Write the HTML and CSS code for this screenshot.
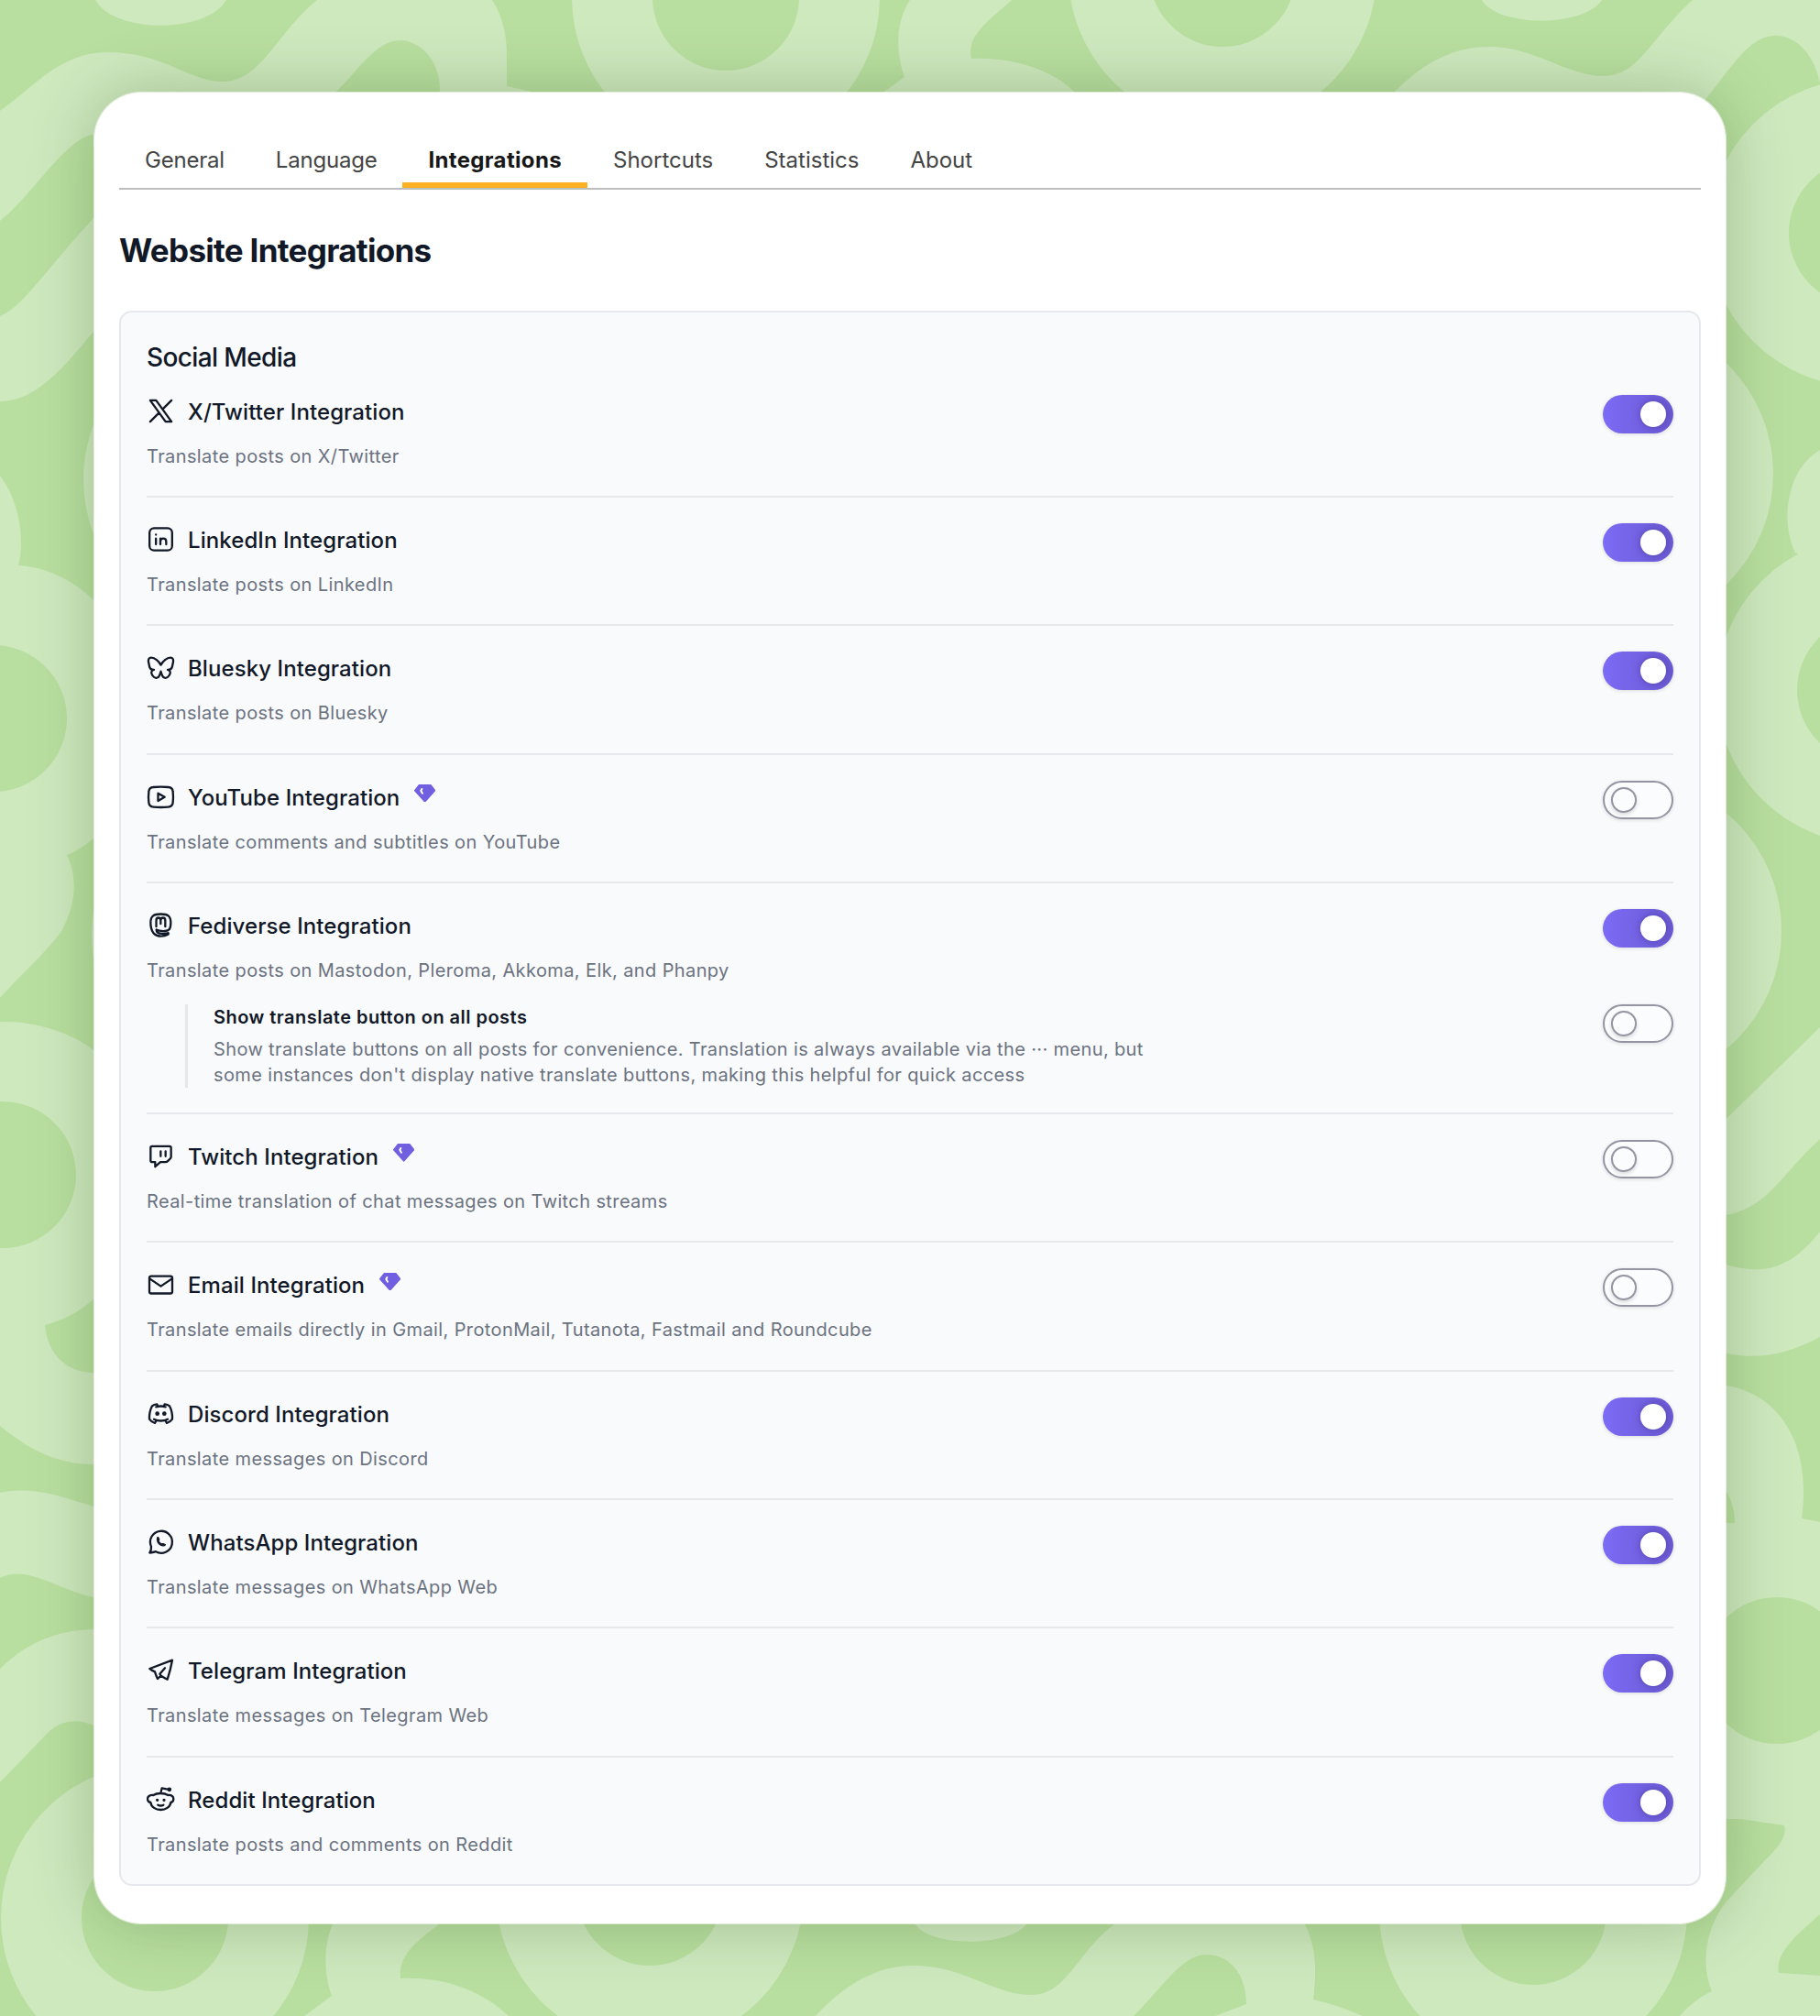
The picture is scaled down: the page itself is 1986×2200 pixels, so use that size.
FILE: index.html
```html
<!DOCTYPE html>
<html lang="en">
<head>
<meta charset="utf-8">
<title>Website Integrations</title>
<link rel="stylesheet" href="styles.css">
</head>
<body>
<div class="stage">
<svg class="pattern" viewBox="0 0 1986 2200" aria-hidden="true">
  <g class="pattern-fill">
    <path d="M104 0C125 37 225 37 247 0Z"/>
    <path d="M0 121C35 97 65 57 117 57C180 57 205 89 243 89C285 89 300 38 346 0H537C550 20 553 42 553 60V94L579 100V140H470L480 98C480 62 455 44 437 44C410 44 390 78 367 100V160H102V147C72 150 35 214 0 241Z"/>
    <path d="M0 345C25 335 45 300 102 238H150V362H102C70 400 40 438 0 438Z"/>
    <path d="M0 519C22 548 27 590 20 617C50 619 79 632 102 655H140V915H102C92 923 83 929 73 933C86 960 82 990 66 1018C46 1044 20 1066 0 1089Z"/>
    <path d="M0 1115C40 1114 80 1128 102 1146H140V1418H102C86 1432 68 1441 49 1446C52 1480 75 1498 102 1498H140V1598H102C60 1598 30 1580 0 1556Z"/>
    <path d="M0 1629C40 1621 70 1635 102 1644H140V1743H102C60 1734 30 1707 0 1722Z"/>
    <path d="M0 1821C35 1787 70 1779 102 1778H140V1883H102C85 1875 68 1877 54 1889L0 1945Z"/>
    <path d="M993 0C976 26 978 58 987 84L965 100V130H1172V100C1150 77 1105 62 1060 64C1054 38 1080 22 1104 0Z"/>
    <path d="M1617 0C1635 30 1728 30 1748 0Z"/>
    <path d="M1522 100C1555 67 1587 51 1625 51C1675 51 1710 83 1750 83C1788 83 1800 43 1847 0H1986V91C1978 50 1950 34 1929 40C1905 46 1890 73 1862 107L1840 140H1522Z"/>
    <path d="M1986 491C1952 510 1941 565 1959 603L1986 620Z"/>
    <path d="M1860 1244L1986 1121V1243C1943 1282 1930 1317 1884 1326H1860Z"/>
    <path d="M1860 1372C1910 1391 1945 1396 1986 1344V1459C1950 1478 1920 1484 1884 1477H1860Z"/>
    <path d="M1860 1512H1884C1935 1520 1978 1568 1966 1657L1986 1661V2089C1962 2110 1936 2132 1941 2153C1958 2154 1972 2155 1986 2156V2200H1833C1842 2189 1855 2179 1868 2173C1855 2142 1862 2102 1884 2075L1926 2030C1944 2013 1950 2002 1947 1992L1900 1985H1860V1662H1893C1893 1650 1890 1638 1884 1628H1860Z"/>
    <path d="M363 2100C352 2125 354 2155 362 2178L332 2200H555C525 2172 485 2157 437 2159C434 2134 455 2118 479 2100V2060H363Z"/>
    <path d="M999 2090V2100C1015 2125 1100 2125 1120 2100V2090Z"/>
    <path d="M890 2200C930 2157 965 2145 998 2145C1050 2145 1085 2177 1125 2177C1165 2177 1175 2130 1216 2100V2060H1424V2100C1438 2128 1436 2155 1433 2182C1455 2187 1470 2193 1487 2200H1326L1360 2187C1360 2150 1338 2133 1317 2133C1290 2133 1270 2167 1237 2200Z"/>
    <circle cx="259" cy="523" r="168"/>
    <circle cx="268" cy="1021" r="168"/>
    <circle cx="1767" cy="517" r="168"/>
    <circle cx="1776" cy="1016" r="168"/>
  </g>
  <g class="pattern-ring">
    <circle cx="792" cy="-3" r="124"/>
    <circle cx="1334" cy="-29" r="124"/>
    <circle cx="2032" cy="254" r="124"/>
    <circle cx="2041" cy="753" r="124"/>
    <circle cx="169" cy="2093" r="124"/>
    <circle cx="709" cy="2065" r="124"/>
    <circle cx="1673" cy="2086" r="124"/>
  </g>
  <g class="pattern-hole">
    <circle cx="-7" cy="784" r="80"/>
    <circle cx="3" cy="1282" r="80"/>
    <circle cx="1939" cy="1823" r="80"/>
  </g>
</svg>
<main class="card">
  <nav class="tabs">
    <a class="tab tab-snug">General</a>
    <a class="tab tab-snug">Language</a>
    <a class="tab tab-active">Integrations</a>
    <a class="tab">Shortcuts</a>
    <a class="tab">Statistics</a>
    <a class="tab">About</a>
  </nav>
  <h1 class="page-title">Website Integrations</h1>
  <section class="panel">
    <h2 class="group-title">Social Media</h2>

    <article class="row">
      <div class="info">
        <h3 class="name"><svg class="icon thin" viewBox="0 0 24 24"><path d="M3 21L10.55 13.45L3 3H8L13.45 10.55L21 3M10.55 13.45L16 21H21L13.45 10.55"/></svg><span>X/Twitter Integration</span></h3>
        <p class="desc">Translate posts on X/Twitter</p>
      </div>
      <span class="toggle on"><i class="knob"></i></span>
    </article>

    <article class="row">
      <div class="info">
        <h3 class="name"><svg class="icon" viewBox="60 459 93 93"><rect x="69.500" y="469" width="74" height="73" rx="15"/><path d="M90.500 503V522M105 503V522M105 513C105 507 109 503 114.500 503S124 507 124 513V522M90.500 490V490.500"/></svg><span>LinkedIn Integration</span></h3>
        <p class="desc">Translate posts on LinkedIn</p>
      </div>
      <span class="toggle on"><i class="knob"></i></span>
    </article>

    <article class="row">
      <div class="info">
        <h3 class="name"><svg class="icon" viewBox="60 880 93 93"><path d="M106.500 918C100 906 87 894 75 894C67 894 65 900 66 908L69 922C70 930 76 934 84 934C75 936 73 944 79 952C86 963 97 963 101 954C103 950 105 945 106.500 939C108 945 110 950 112 954C116 963 127 963 134 952C140 944 138 936 129 934C137 934 143 930 144 922L147 908C148 900 146 894 138 894C126 894 113 906 106.500 918Z"/></svg><span>Bluesky Integration</span></h3>
        <p class="desc">Translate posts on Bluesky</p>
      </div>
      <span class="toggle on"><i class="knob"></i></span>
    </article>

    <article class="row">
      <div class="info">
        <h3 class="name"><svg class="icon" viewBox="60 71 93 93"><path d="M82 86Q106.500 84 131 86Q145 87 146 101Q148 118.500 146 136Q145 150 131 151Q106.500 153 82 151Q68 150 67 136Q65 118.500 67 101Q68 87 82 86Z"/><path d="M97.500 106L119 118.500L97.500 131Z"/></svg><span>YouTube Integration</span><svg class="gem" viewBox="0 0 70 59"><path class="gem-body" d="M16 2H54L68 20L35 57L2 20Z"/><path class="gem-shine" d="M25 15L22 21L27 29"/></svg></h3>
        <p class="desc">Translate comments and subtitles on YouTube</p>
      </div>
      <span class="toggle"><i class="knob"></i></span>
    </article>

    <article class="row row-tall">
      <div class="info">
        <h3 class="name"><svg class="icon" viewBox="60 491.500 93 93"><path d="M131 568C117 577 95 577 85 567C76 558 73 545 73 530C73 509 82 502 106 502C131 502 139 509 139 530C139 551 134 557 120 557.500C108 558 98 557 92 553C92 562 100 566 109 566C118 567 126 566 131 564Z"/><path d="M91.500 543V523C91.500 511 106 511 106 523V534M106 523C106 511 121 511 121 523V543"/></svg><span>Fediverse Integration</span></h3>
        <p class="desc">Translate posts on Mastodon, Pleroma, Akkoma, Elk, and Phanpy</p>
      </div>
      <span class="toggle on"><i class="knob"></i></span>
      <div class="sub">
        <div class="sub-info">
          <h4 class="sub-name">Show translate button on all posts</h4>
          <p class="sub-desc">Show translate buttons on all posts for convenience. Translation is always available via the ··· menu, but some instances don't display native translate buttons, making this helpful for quick access</p>
        </div>
        <span class="toggle"><i class="knob"></i></span>
      </div>
    </article>

    <article class="row">
      <div class="info">
        <h3 class="name"><svg class="icon" viewBox="60 48.500 93 93"><path d="M78 63H135Q140 63 140 68V98Q140 101 137 104L129 112Q126 115 122 115H105L88 130V115H78Q73 115 73 110V68Q73 63 78 63ZM106 80V96M122 80V96"/></svg><span>Twitch Integration</span><svg class="gem" viewBox="0 0 70 59"><path class="gem-body" d="M16 2H54L68 20L35 57L2 20Z"/><path class="gem-shine" d="M25 15L22 21L27 29"/></svg></h3>
        <p class="desc">Real-time translation of chat messages on Twitch streams</p>
      </div>
      <span class="toggle"><i class="knob"></i></span>
    </article>

    <article class="row">
      <div class="info">
        <h3 class="name"><svg class="icon" viewBox="60 470 93 93"><rect x="69" y="490" width="75" height="56.500" rx="6"/><path d="M71 499L106.500 523L142 499"/></svg><span>Email Integration</span><svg class="gem" viewBox="0 0 70 59"><path class="gem-body" d="M16 2H54L68 20L35 57L2 20Z"/><path class="gem-shine" d="M25 15L22 21L27 29"/></svg></h3>
        <p class="desc">Translate emails directly in Gmail, ProtonMail, Tutanota, Fastmail and Roundcube</p>
      </div>
      <span class="toggle"><i class="knob"></i></span>
    </article>

    <article class="row">
      <div class="info">
        <h3 class="name"><svg class="icon" viewBox="60 891 93 93"><path d="M97 914L94 907Q84 908 78 913Q68 932 69 956Q76 966 87 969L92 960M116 914L119 907Q129 908 135 913Q145 932 144 956Q137 966 126 969L121 960M91 916Q106.500 911 122 916M84 956Q106.500 967 129 956"/><circle class="solid" cx="95" cy="938" r="5"/><circle class="solid" cx="118" cy="938" r="5"/></svg><span>Discord Integration</span></h3>
        <p class="desc">Translate messages on Discord</p>
      </div>
      <span class="toggle on"><i class="knob"></i></span>
    </article>

    <article class="row">
      <div class="info">
        <h3 class="name"><svg class="icon" viewBox="60 52 93 93"><path d="M75 114A36 36 0 1 1 90 130.500Q80 134 70 134.500Q76 126 75 114Z"/><path class="solid" d="M95 85C97 82 99 84 101 91C101 94 98 95 100 98C103 102 106 106 110 106C113 103 116 105 121 108C119 113 111 112 105 109C97 104 93 95 95 85Z"/></svg><span>WhatsApp Integration</span></h3>
        <p class="desc">Translate messages on WhatsApp Web</p>
      </div>
      <span class="toggle on"><i class="knob"></i></span>
    </article>

    <article class="row">
      <div class="info">
        <h3 class="name"><svg class="icon" viewBox="60 473 93 93"><path d="M144 487L70 515Q78 521 87 525Q91 538 96 548L107 538Q118 545 128 550Q138 519 144 487ZM107 538L103 532L120 513"/></svg><span>Telegram Integration</span></h3>
        <p class="desc">Translate messages on Telegram Web</p>
      </div>
      <span class="toggle on"><i class="knob"></i></span>
    </article>

    <article class="row row-last">
      <div class="info">
        <h3 class="name"><svg class="icon" viewBox="60 893 93 93"><path d="M106 920C96 920 88 922 82 926C72 924 63 930 63 938C63 945 67 949 73 950C75 965 90 974 106 974C122 974 137 965 139 950C144 949 148 945 148 938C148 930 140 924 130 926C124 922 116 920 106 920ZM106 919L110 903L129 907M97 958Q106 963 115 958"/><circle class="solid" cx="134.500" cy="907.500" r="5"/><circle class="solid" cx="95" cy="942" r="3"/><circle class="solid" cx="117" cy="942" r="3"/></svg><span>Reddit Integration</span></h3>
        <p class="desc">Translate posts and comments on Reddit</p>
      </div>
      <span class="toggle on"><i class="knob"></i></span>
    </article>
  </section>
</main>
</div>
</body>
</html>
```
FILE: styles.css
```css
* { box-sizing: border-box; margin: 0; padding: 0; }

body {
  width: 1986px;
  height: 2200px;
  overflow: hidden;
  background: #b9dfa0;
  font-family: Inter, "Liberation Sans", sans-serif;
  color: #111827;
}

.stage { display: grid; width: 1986px; height: 2200px; }
.pattern, .card { grid-area: 1 / 1; }
.pattern { width: 1986px; height: 2200px; }
.pattern-fill { fill: #cfe9bf; }
.pattern-ring { fill: none; stroke: #cfe9bf; stroke-width: 88; }
.pattern-hole { fill: #b9dfa0; }

.card {
  margin: 100px 102px;
  padding: 56px 27px 0;
  border: 1px solid rgba(255, 255, 255, 0.6);
  border-radius: 52px;
  background: #fff;
  background-clip: padding-box;
  box-shadow: 0 0 70px rgba(20, 50, 0, 0.24);
}

.tabs { display: flex; height: 50px; border-bottom: 2px solid #bdbdbd; }
.tab { height: 48px; padding: 0 28px; font-size: 24px; line-height: 36px; letter-spacing: 0; color: #444; }
.tab-snug { letter-spacing: -0.22px; }
.tab-active { border-bottom: 6px solid #fdb022; font-weight: 700; letter-spacing: 0.34px; color: #171717; }

.page-title { margin-top: 44px; font-size: 35px; line-height: 44px; font-weight: 700; letter-spacing: -0.7px; }

.panel {
  height: 1719px;
  margin-top: 44px;
  padding: 36px 28px 0;
  border: 2px solid #e6e8ee;
  border-radius: 14px;
  background: #f9fafc;
}
.group-title { font-size: 28px; line-height: 27px; font-weight: 500; letter-spacing: -0.62px; margin-bottom: -1.5px; }

.row {
  display: flex;
  flex-wrap: wrap;
  justify-content: space-between;
  align-items: flex-start;
  align-content: flex-start;
  height: 140.36px;
  padding-top: 28px;
  border-bottom: 2px solid #e7e8eb;
}
.row-tall { height: 252.1px; }
.row-last { border-bottom: 0; }

.name { display: flex; align-items: center; height: 36px; font-size: 24px; line-height: 34px; font-weight: 500; letter-spacing: 0.08px; }
.name span { margin-top: 2px; }
.icon {
  width: 31px;
  height: 31px;
  margin: -1px 14px 0 0;
  fill: none;
  stroke: #111827;
  stroke-width: 6.9;
  stroke-linecap: round;
  stroke-linejoin: round;
}
.thin { stroke-width: 1.8; }
.solid { fill: #111827; stroke-width: 4; }
.gem { width: 23.3px; height: 19.7px; margin: -8px 0 0 15.5px; }
.gem-body { fill: #705fe0; stroke: #705fe0; stroke-width: 4; stroke-linejoin: round; }
.gem-shine { fill: none; stroke: #fff; stroke-width: 6; stroke-linecap: round; stroke-linejoin: round; }

.desc { margin-top: 17px; font-size: 20px; line-height: 28px; letter-spacing: 0.39px; color: #6b7280; }

.toggle {
  display: flex;
  align-items: center;
  flex: none;
  width: 77px;
  height: 42px;
  padding-left: 6.5px;
  border: 2px solid #9494a3;
  border-radius: 21px;
  background: #fbfcfd;
  box-shadow: 0 1px 4px rgba(0, 0, 0, 0.12);
}
.knob {
  width: 28px;
  height: 28px;
  border: 2px solid #9494a3;
  border-radius: 50%;
  background: #fbfcfd;
  box-shadow: 0 2px 4px rgba(0, 0, 0, 0.14);
}
.on { padding-left: 40.5px; border: 0; background: linear-gradient(90deg, #7c6bf5, #6a5ad2); }
.on .knob { border: 0; background: #fff; box-shadow: 0 0 7px rgba(30, 20, 90, 0.35); }

.sub { display: flex; justify-content: space-between; align-items: flex-start; width: 100%; margin-top: 23px; padding-left: 42px; }
.sub-info { width: 1080px; height: 91px; padding-left: 28px; border-left: 3px solid #e5e7eb; }
.sub-name { font-size: 20px; line-height: 28px; font-weight: 600; letter-spacing: 0.47px; }
.sub-desc { margin-top: 7px; font-size: 20px; line-height: 28px; letter-spacing: 0.365px; color: #6b7280; }
```
